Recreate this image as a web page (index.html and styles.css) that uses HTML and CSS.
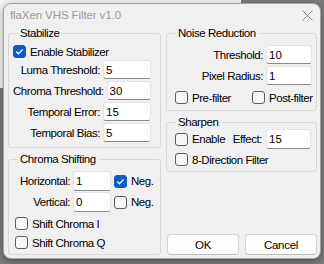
FILE: index.html
```html
<!DOCTYPE html>
<html>
<head>
<meta charset="utf-8">
<link rel="stylesheet" href="styles.css">
</head>
<body>
<div class="backdrop"></div>
<div class="window">
  <div class="titlebar">
    <span class="title">flaXen VHS Filter v1.0</span>
    <svg class="close" width="11" height="11" viewBox="0 0 11 11"><path d="M0.5 0.5 L10.5 10.5 M10.5 0.5 L0.5 10.5" stroke="#8c8c8c" stroke-width="1" fill="none"/></svg>
  </div>
  <div class="content">
    <div class="col">
      <fieldset class="group stabilize">
        <legend>Stabilize</legend>
        <div class="inner">
          <label class="check"><span class="box on"><svg width="13" height="13" viewBox="0 0 13 13"><path d="M3.2 6.6 L5.4 8.8 L9.8 4.4" stroke="#fff" stroke-width="1.3" fill="none"/></svg></span>Enable Stabilizer</label>
          <div class="field"><span class="lbl">Luma Threshold:</span><span class="input">5</span></div>
          <div class="field"><span class="lbl">Chroma Threshold:</span><span class="input">30</span></div>
          <div class="field"><span class="lbl">Temporal Error:</span><span class="input">15</span></div>
          <div class="field"><span class="lbl">Temporal Bias:</span><span class="input">5</span></div>
        </div>
      </fieldset>
      <fieldset class="group chroma">
        <legend>Chroma Shifting</legend>
        <div class="inner">
          <div class="field"><span class="lbl">Horizontal:</span><span class="input">1</span><label class="check"><span class="box on"><svg width="13" height="13" viewBox="0 0 13 13"><path d="M3.2 6.6 L5.4 8.8 L9.8 4.4" stroke="#fff" stroke-width="1.3" fill="none"/></svg></span>Neg.</label></div>
          <div class="field"><span class="lbl">Vertical:</span><span class="input">0</span><label class="check"><span class="box"></span>Neg.</label></div>
          <label class="check"><span class="box"></span>Shift Chroma I</label>
          <label class="check"><span class="box"></span>Shift Chroma Q</label>
        </div>
      </fieldset>
    </div>
    <div class="col">
      <fieldset class="group noise">
        <legend>Noise Reduction</legend>
        <div class="inner">
          <div class="field"><span class="lbl">Threshold:</span><span class="input">10</span></div>
          <div class="field"><span class="lbl">Pixel Radius:</span><span class="input">1</span></div>
          <div class="pair">
            <label class="check"><span class="box"></span>Pre-filter</label>
            <label class="check"><span class="box"></span>Post-filter</label>
          </div>
        </div>
      </fieldset>
      <fieldset class="group sharpen">
        <legend>Sharpen</legend>
        <div class="inner">
          <div class="field"><label class="check"><span class="box"></span>Enable</label><span class="lbl">Effect:</span><span class="input">15</span></div>
          <label class="check"><span class="box"></span>8-Direction Filter</label>
        </div>
      </fieldset>
      <div class="buttons">
        <button class="btn">OK</button>
        <button class="btn">Cancel</button>
      </div>
    </div>
  </div>
</div>
</body>
</html>
```
FILE: styles.css
```css
* { box-sizing: border-box; }
html, body { margin: 0; }
body {
  width: 324px;
  height: 264px;
  padding: 3px;
  background: #7b7b7b;
  overflow: hidden;
  position: relative;
  font-family: "Liberation Sans", Arial, sans-serif;
  font-size: 11.5px;
  letter-spacing: -0.45px;
  color: #000;
}
.backdrop {
  position: absolute;
  left: 0;
  top: 0;
  width: 241px;
  height: 88px;
  background: #f2f2f2;
}
.window {
  position: relative;
  width: 318px;
  height: 256px;
  border: 1px solid #a3a3a3;
  border-radius: 8px;
  background: #f0f0f0;
  box-shadow: 0 2px 6px rgba(0,0,0,0.35);
  display: flex;
  flex-direction: column;
}
.titlebar {
  height: 23px;
  display: flex;
  align-items: center;
  justify-content: space-between;
  padding: 0 7px 0 6px;
}
.title {
  color: #9b9b9b;
  font-size: 11.5px;
  letter-spacing: -0.1px;
}
.content {
  flex: 1;
  display: grid;
  grid-template-columns: 153px 151px;
  column-gap: 5px;
  padding: 0 3px 3px 4px;
}
.col {
  display: flex;
  flex-direction: column;
  gap: 4px;
}
.group {
  margin: 0;
  padding: 0;
  min-width: 0;
  border: 1px solid #d8d8d8;
  border-radius: 3px;
}
.group legend {
  margin-left: 8px;
  padding: 0 3px;
  height: 14px;
  line-height: 14px;
}
.inner {
  display: flex;
  flex-direction: column;
  gap: 2px;
}
.stabilize .inner { padding: 4px 9px 5px 4px; }
.stabilize .inner > .check { height: 15px; margin-bottom: -1px; }
.chroma .inner { padding: 5px 4px 2px 6px; }
.chroma .inner > .check + .check { margin-top: -2px; }
.noise .inner { padding: 5px 4px 3px 8px; }
.sharpen .inner { padding: 0 5px 2px 8px; gap: 1px; }

.field {
  display: flex;
  align-items: center;
  height: 19px;
}
.lbl {
  flex: 1;
  text-align: right;
  padding-right: 3px;
  white-space: nowrap;
}
.input {
  height: 19px;
  width: 48px;
  background: #fff;
  border: 1px solid #e4e4e4;
  border-bottom-color: #8a8a8a;
  border-radius: 3px;
  padding-left: 2px;
  display: flex;
  align-items: center;
  letter-spacing: 0;
}
.chroma .field { height: 20px; }
.chroma .field:first-child { margin-bottom: -1px; }
.chroma .lbl { flex: 0 0 58px; }
.chroma .input { width: 38px; height: 20px; }
.chroma .field .check { margin-left: 3px; }
.noise .input { width: 46px; }
.sharpen .field { height: 20px; }
.sharpen .input { width: 45px; height: 20px; }
.sharpen .lbl { padding-right: 4px; }

.check {
  display: flex;
  align-items: center;
  gap: 4px;
  height: 19px;
  white-space: nowrap;
}
.box {
  flex: none;
  width: 13px;
  height: 13px;
  border: 1px solid #5c5c5c;
  border-radius: 3px;
  background: #f7f7f7;
  display: flex;
}
.box.on {
  border-color: #0a5fc2;
  background: #0a5fc2;
}
.box svg { margin: -1px; }
.pair {
  display: grid;
  grid-template-columns: 77px auto;
  margin-top: 1px;
}
.buttons {
  margin-top: auto;
  display: flex;
  gap: 6px;
  padding-left: 1px;
}
.btn {
  width: 72px;
  height: 21px;
  margin: 0;
  padding: 0;
  font-family: inherit;
  font-size: 11.5px;
  letter-spacing: -0.3px;
  color: #000;
  background: #fdfdfd;
  border: 1px solid #d3d3d3;
  border-bottom-color: #bdbdbd;
  border-radius: 4px;
}
```
